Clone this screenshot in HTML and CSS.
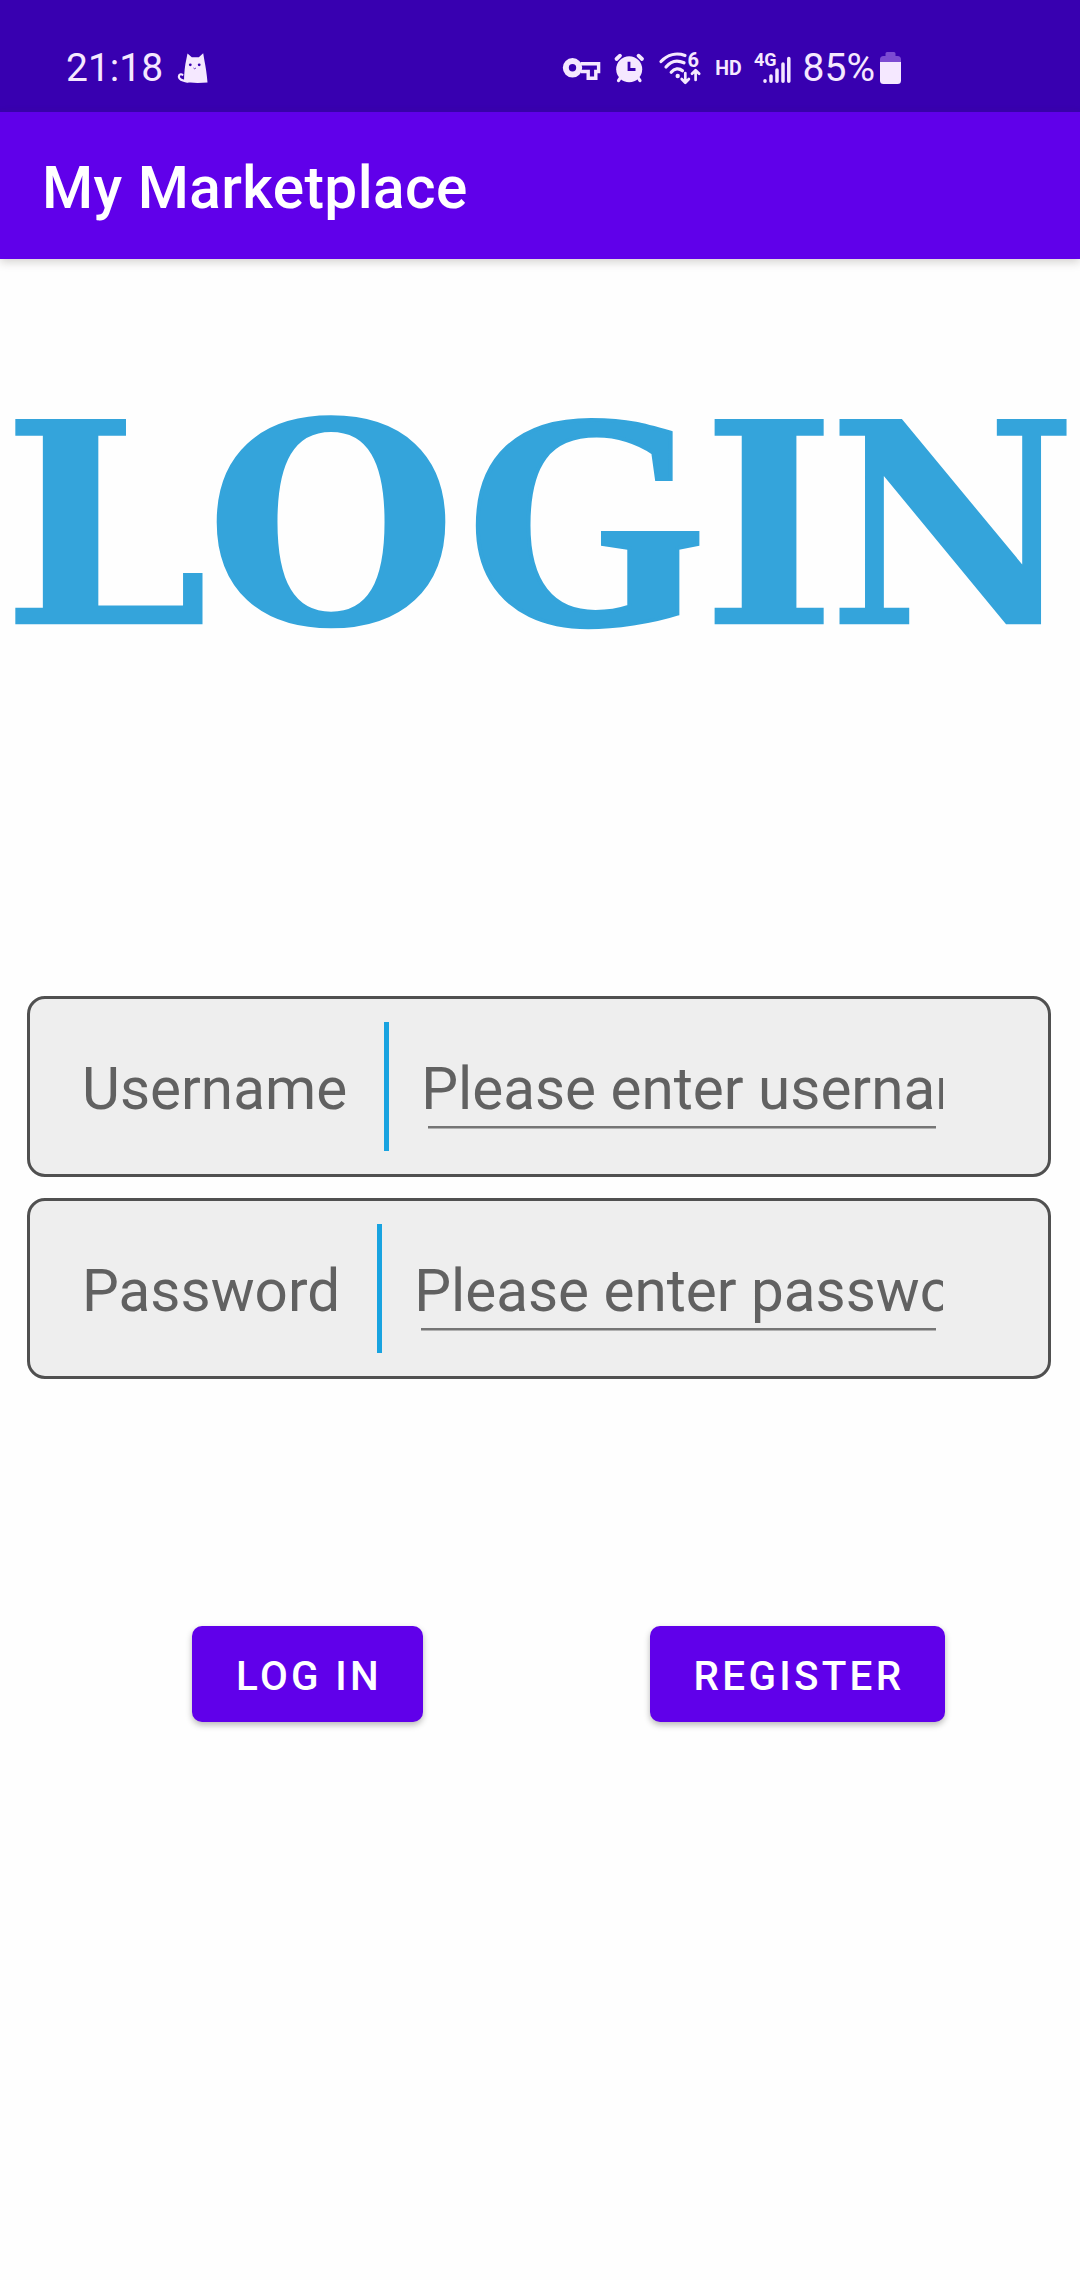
FILE: index.html
```html
<!DOCTYPE html>
<html lang="en">
<head>
<meta charset="utf-8">
<title>My Marketplace</title>
<link rel="stylesheet" href="styles.css">
</head>
<body>
<div class="status-bar">
  <div class="status-left">
    <span class="clock">21:18</span>
    <svg class="cat" width="32" height="32" viewBox="0 0 32 32">
      <path d="M10.5 29.5L6.5 28.6C2.5 28 1.2 25.2 2.2 23.3C2.9 22 4.6 22 5.4 22.8" fill="none" stroke="currentColor" stroke-width="2.2" stroke-linecap="round"/>
      <path d="M7 30C7 21 8 13 9.3 7.500L10.500 1.500L14.800 5.300H21.800L26.200 1.300L27.500 9C28.700 15 29.800 22 30.500 30.400C23 31.200 14 31 7 30Z" fill="currentColor"/>
      <circle class="cut" cx="13.300" cy="12.800" r="1.400"/><circle class="cut" cx="22.200" cy="12.800" r="1.400"/>
      <path d="M16.500 16l1.200.8 1.200-.8" fill="none" stroke="#3800b0" stroke-width=".8"/>
    </svg>
  </div>
  <div class="status-right">
    <svg class="key" width="42" height="28" viewBox="0 0 42 28">
      <circle cx="11.500" cy="13.800" r="6.700" fill="none" stroke="currentColor" stroke-width="6"/>
      <path d="M19.500 9.700H37.600V17.500H34.800V24.200H27.200V17.500H19.500" fill="none" stroke="currentColor" stroke-width="3.400"/>
    </svg>
    <svg class="alarm" width="30" height="32" viewBox="0 0 30 32">
      <g fill="none" stroke="currentColor" stroke-linecap="round">
        <path d="M2.500 7L6 3.700M24.500 3.700L28 7" stroke-width="3.800"/>
        <path d="M6.500 25.500L4.500 28.600M24 25.500L26 28.600" stroke-width="3.200"/>
      </g>
      <circle cx="15.200" cy="17.200" r="13" fill="currentColor"/>
      <path d="M15 9.800V17.500H21.500" fill="none" stroke="#3800b0" stroke-width="2.800"/>
    </svg>
    <svg class="wifi" width="44" height="36" viewBox="0 0 44 36">
      <g fill="none" stroke="currentColor" stroke-width="3.200" stroke-linecap="round" stroke-linejoin="round">
        <path d="M3 11.500C9.500 4.500 18.500 2.500 27 5.500"/>
        <path d="M8 17C13 10.800 19.500 9.800 26 12.800"/>
        <path d="M13.200 22.300C16.500 18.300 21 17.800 24.500 20.800"/>
        <path d="M27.300 23V32M23.700 29L27.300 32.700L30.900 29M37.600 30V20.500M34 23.800L37.600 20.100L41.200 23.800" stroke-width="2.700"/>
      </g>
      <circle cx="19.700" cy="26" r="2.200" fill="currentColor"/>
      <text class="wifi-gen" x="29.500" y="17">6</text>
    </svg>
    <span class="hd">HD</span>
    <svg class="signal" width="38" height="36" viewBox="0 0 38 36">
      <text class="net" x="0" y="15.500">4G</text>
      <path d="M11 30.800V31.200M17 26V31.200M23 20V31.200M29 14V31.200M34.800 8.500V31.200" fill="none" stroke="currentColor" stroke-width="3.500" stroke-linecap="round"/>
    </svg>
    <span class="battery-level">85%</span>
    <svg class="battery" width="21" height="34" viewBox="0 0 21 34">
      <path d="M0 11.700V8.500Q0 5 3.500 5H5.500V2.500Q5.500 1 7 1H14Q15.500 1 15.500 2.500V5H17.500Q21 5 21 8.500V11.700Z" fill="#7c4bd2"/>
      <path d="M0 11H21V29.500Q21 33 17.500 33H3.500Q0 33 0 29.500Z" fill="currentColor"/>
    </svg>
  </div>
</div>
<header class="app-bar"><h1 class="title">My Marketplace</h1></header>
<main class="screen">
  <svg class="banner" width="1080" height="260" viewBox="0 0 1080 260">
    <text class="banner-text" y="242" transform="scale(1 .9683)"><tspan x="1.500" textLength="207.500" lengthAdjust="spacingAndGlyphs">L</tspan><tspan x="204.500">O</tspan><tspan class="banner-g" x="462.500" textLength="243.500" lengthAdjust="spacingAndGlyphs">G</tspan><tspan x="701">I</tspan><tspan x="827.500" textLength="250" lengthAdjust="spacingAndGlyphs">N</tspan></text>
  </svg>
  <form class="form">
    <div class="field">
      <label class="label">Username</label>
      <span class="divider"></span>
      <div class="entry"><span class="hint">Please enter username</span></div>
    </div>
    <div class="field">
      <label class="label">Password</label>
      <span class="divider"></span>
      <div class="entry"><span class="hint">Please enter password</span></div>
    </div>
  </form>
  <div class="actions">
    <button class="btn btn-login" type="button">LOG IN</button>
    <button class="btn btn-register" type="button">REGISTER</button>
  </div>
</main>
</body>
</html>
```
FILE: styles.css
```css
* { box-sizing: border-box; }
body {
  margin: 0;
  width: 1080px;
  height: 2280px;
  overflow: hidden;
  background: #fefefe;
  font-family: Roboto, sans-serif;
}
svg { display: block; flex: none; overflow: visible; }

.status-bar {
  display: flex;
  justify-content: space-between;
  height: 112px;
  padding: 24px 179px 0 66px;
  background: #3800b0;
  color: #f5e8ff;
}
.status-left, .status-right { display: flex; align-items: center; }
.clock, .battery-level { font-size: 39px; line-height: 46px; }
.cat { margin-left: 14px; }
.cut { fill: #3800b0; }
.alarm { margin-left: 11px; }
.wifi { margin-left: 14px; }
.wifi-gen { font-size: 20px; font-weight: 700; fill: currentColor; }
.hd { margin-left: 13px; font-size: 19.500px; font-weight: 700; line-height: 24px; padding-top: 1px; }
.signal { margin-left: 12px; }
.net { font-size: 18px; font-weight: 700; fill: currentColor; }
.battery-level { margin-left: 11px; }
.battery { margin-left: 5px; }

.app-bar {
  position: relative;
  display: flex;
  align-items: center;
  height: 147px;
  padding: 4px 42px 0;
  background: #6000ea;
  box-shadow: 0 3px 9px rgba(60, 50, 40, .22);
}
.title {
  margin: 0;
  color: #fff;
  font-size: 58.500px;
  font-weight: 500;
  line-height: 70px;
  letter-spacing: .430px;
}

.screen { display: flex; flex-direction: column; padding-top: 131px; }
.banner-text {
  font-family: "DejaVu Serif", serif;
  font-size: 290.800px;
  font-weight: 700;
  fill: #34a4db;
}
.banner-g {
  font-family: "Liberation Serif", serif;
  font-size: 319px;
  stroke: #34a4db;
  stroke-width: 4px;
}

.form {
  display: flex;
  flex-direction: column;
  gap: 21px;
  margin: 346px 29px 0 27px;
}
.field {
  display: flex;
  align-items: center;
  height: 181px;
  padding: 0 105px 0 52px;
  border: 3px solid #505050;
  border-radius: 18px;
  background: #eee;
  color: #616161;
  font-size: 58.400px;
}
.label { line-height: 78px; padding-top: 5px; letter-spacing: .03px; }
.divider {
  flex: none;
  width: 5px;
  height: 129px;
  margin: 0 32px 0 37px;
  background: #18a3e0;
}
.entry { flex: 1; min-width: 0; padding-top: 5px; }
.hint {
  display: block;
  height: 80px;
  overflow: hidden;
  line-height: 80px;
  white-space: nowrap;
  background: linear-gradient(#757575, #757575) 7px 77px / calc(100% - 14px) 2.500px no-repeat;
}

.actions {
  display: flex;
  justify-content: space-between;
  margin: 247px 135px 0 192px;
}
.btn {
  height: 96px;
  padding: 6px 0 0 3px;
  border: 0;
  border-radius: 10px;
  background: #6000ea;
  box-shadow: 0 3px 6px rgba(0, 0, 0, .28);
  color: #fff;
  font: 500 40.400px/90px Roboto, sans-serif;
  letter-spacing: 3.300px;
}
.btn-login { width: 231px; }
.btn-register { width: 295px; }
```
